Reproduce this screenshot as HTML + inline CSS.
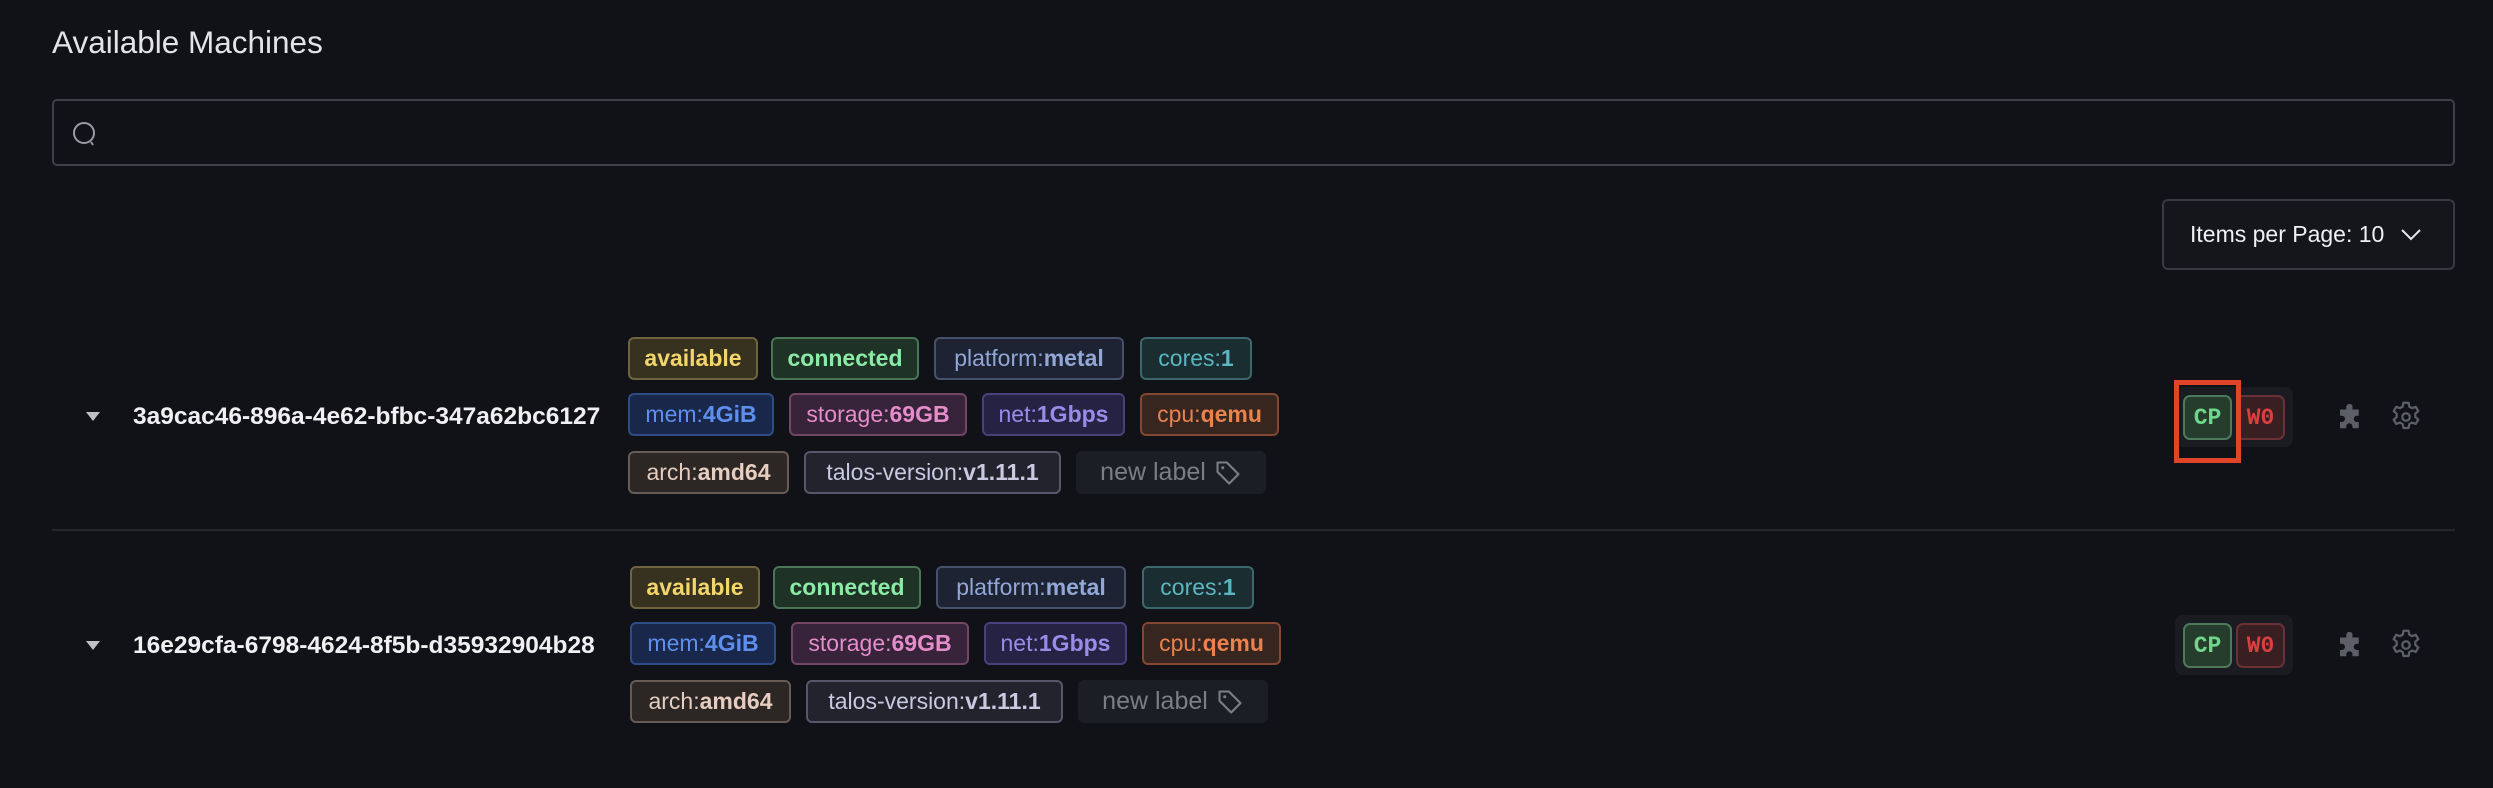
<!DOCTYPE html>
<html><head><meta charset="utf-8"><style>
*{box-sizing:border-box;margin:0;padding:0}
body{width:2493px;height:788px;background:#111217;font-family:"Liberation Sans",Arial,sans-serif;position:relative;overflow:hidden;color:#e6e6ea}
.abs{position:absolute}
.title{left:52px;top:24px;font-size:31.5px;color:#e4e4e8}
.search{left:52px;top:99px;width:2403px;height:67px;border:2px solid #3e4048;border-radius:5px}
.ipp{left:2162px;top:199px;width:293px;height:71px;border:2px solid #383a42;border-radius:6px;background:#15161c;font-size:23px;color:#f0f0f2;display:flex;align-items:center;padding-left:26px}
.tag{position:absolute;height:43px;border:2px solid;border-radius:6px;font-size:23px;display:flex;align-items:center;justify-content:center;white-space:nowrap}
.tag b{font-weight:bold}
.av{background:#36321f;border-color:#6e6440;color:#f4d56c;font-weight:bold}
.cn{background:#1f3226;border-color:#4a7656;color:#8aeaa6;font-weight:bold}
.pl{background:#1d2333;border-color:#46526c;color:#92a7d6}
.co{background:#1a2d31;border-color:#3c676d;color:#5bb6c2}
.me{background:#19284a;border-color:#2e4c86;color:#5f8fee}
.st{background:#37233a;border-color:#724766;color:#e58ccb}
.ne{background:#252244;border-color:#48417c;color:#9b8be8}
.cp{background:#37251f;border-color:#84472f;color:#e9824c}
.ar{background:#2c2725;border-color:#665b55;color:#e6cdbf}
.ta{background:#23232d;border-color:#57576c;color:#c9c9e2}
.nl{background:#1c1e25;border-color:#1c1e25;color:#7b7e86;font-size:25px}
.id{font-weight:bold;font-size:24.5px;color:#f0f0f2}
.caret{width:0;height:0;border-left:7px solid transparent;border-right:7px solid transparent;border-top:9px solid #bfc0c6}
.grp{width:118px;height:60px;background:#1a1c22;border-radius:8px}
.btn{width:49px;height:45px;border:2px solid;border-radius:7px;font-family:"Liberation Mono",monospace;font-weight:bold;font-size:23px;display:flex;align-items:center;justify-content:center}
.bcp{background:#263d2e;border-color:#4c7a5a;color:#6fd68a}
.bw{background:#3a1f22;border-color:#6a3234;color:#d8413f}
</style></head><body>
<div class="abs title">Available Machines</div>
<div class="abs search"><svg class="abs" style="left:18px;top:20px" width="28" height="28" viewBox="0 0 28 28"><circle cx="12" cy="12" r="10" fill="none" stroke="#9a9ca3" stroke-width="2"/><path d="M19 21 L21 24" stroke="#9a9ca3" stroke-width="2"/></svg></div>
<div class="abs ipp">Items per Page: 10<svg style="margin-left:16px" width="22" height="14" viewBox="0 0 22 14"><path d="M2 2 L11 11 L20 2" fill="none" stroke="#e8e8ea" stroke-width="2"/></svg></div>

<!-- row 1 -->
<div class="abs caret" style="left:86px;top:412px"></div>
<div class="abs id" style="left:133px;top:403px">3a9cac46-896a-4e62-bfbc-347a62bc6127</div>
<div class="tag av" style="left:628px;top:337px;width:130px">available</div>
<div class="tag cn" style="left:771px;top:337px;width:148px">connected</div>
<div class="tag pl" style="left:934px;top:337px;width:190px">platform:<b>metal</b></div>
<div class="tag co" style="left:1140px;top:337px;width:112px">cores:<b>1</b></div>
<div class="tag me" style="left:628px;top:393px;width:146px">mem:<b>4GiB</b></div>
<div class="tag st" style="left:789px;top:393px;width:178px">storage:<b>69GB</b></div>
<div class="tag ne" style="left:982px;top:393px;width:143px">net:<b>1Gbps</b></div>
<div class="tag cp" style="left:1140px;top:393px;width:139px">cpu:<b>qemu</b></div>
<div class="tag ar" style="left:628px;top:451px;width:161px">arch:<b>amd64</b></div>
<div class="tag ta" style="left:804px;top:451px;width:257px">talos-version:<b>v1.11.1</b></div>
<div class="tag nl" style="left:1076px;top:451px;width:190px">new label<svg style="margin-left:8px" width="28" height="28" viewBox="0 0 24 24"><path d="M3 3 H11 L21 13 L13 21 L3 11 Z" fill="none" stroke="#7b7e86" stroke-width="1.8" stroke-linejoin="round"/><circle cx="7.5" cy="7.5" r="1.3" fill="#7b7e86"/></svg></div>
<div class="abs grp" style="left:2175px;top:387px"></div>
<div class="abs btn bcp" style="left:2183px;top:395px">CP</div>
<div class="abs btn bw" style="left:2236px;top:395px">W0</div>
<div class="abs" style="left:2174px;top:380px;width:67px;height:83px;border:5px solid #e0452a"></div>

<div class="abs" style="left:52px;top:529px;width:2403px;height:2px;background:#26272d"></div>

<!-- row 2 -->
<div class="abs caret" style="left:86px;top:641px"></div>
<div class="abs id" style="left:133px;top:632px">16e29cfa-6798-4624-8f5b-d35932904b28</div>
<div class="tag av" style="left:630px;top:566px;width:130px">available</div>
<div class="tag cn" style="left:773px;top:566px;width:148px">connected</div>
<div class="tag pl" style="left:936px;top:566px;width:190px">platform:<b>metal</b></div>
<div class="tag co" style="left:1142px;top:566px;width:112px">cores:<b>1</b></div>
<div class="tag me" style="left:630px;top:622px;width:146px">mem:<b>4GiB</b></div>
<div class="tag st" style="left:791px;top:622px;width:178px">storage:<b>69GB</b></div>
<div class="tag ne" style="left:984px;top:622px;width:143px">net:<b>1Gbps</b></div>
<div class="tag cp" style="left:1142px;top:622px;width:139px">cpu:<b>qemu</b></div>
<div class="tag ar" style="left:630px;top:680px;width:161px">arch:<b>amd64</b></div>
<div class="tag ta" style="left:806px;top:680px;width:257px">talos-version:<b>v1.11.1</b></div>
<div class="tag nl" style="left:1078px;top:680px;width:190px">new label<svg style="margin-left:8px" width="28" height="28" viewBox="0 0 24 24"><path d="M3 3 H11 L21 13 L13 21 L3 11 Z" fill="none" stroke="#7b7e86" stroke-width="1.8" stroke-linejoin="round"/><circle cx="7.5" cy="7.5" r="1.3" fill="#7b7e86"/></svg></div>
<div class="abs grp" style="left:2175px;top:615px"></div>
<div class="abs btn bcp" style="left:2183px;top:623px">CP</div>
<div class="abs btn bw" style="left:2236px;top:623px">W0</div>

<!-- icons -->
<svg class="abs" style="left:2335px;top:402px" width="30" height="30" viewBox="0 0 24 24"><path d="M10 2 a2.5 2.5 0 0 1 4 1.5 V6 h5 v5 h-1.5 a2.5 2.5 0 1 0 0 5 H19 v5 h-5 v-1.5 a2.5 2.5 0 1 0-5 0 V21 H4 v-5 h1.5 a2.5 2.5 0 1 0 0-5 H4 V6 h5 V3.5 Z" fill="#5d5f68"/></svg>
<svg class="abs" style="left:2388px;top:399px" width="36" height="36" viewBox="0 0 24 24"><path d="M10.3 2.5h3.4l.5 2.6 1.8 1 2.5-.9 1.7 2.9-2 1.7v2.2l2 1.7-1.7 2.9-2.5-.9-1.8 1-.5 2.6h-3.4l-.5-2.6-1.8-1-2.5.9-1.7-2.9 2-1.7v-2.2l-2-1.7 1.7-2.9 2.5.9 1.8-1z" fill="none" stroke="#5d5f68" stroke-width="1.5" stroke-linejoin="round"/><circle cx="12" cy="12" r="2.5" fill="none" stroke="#5d5f68" stroke-width="1.5"/></svg>
<svg class="abs" style="left:2335px;top:630px" width="30" height="30" viewBox="0 0 24 24"><path d="M10 2 a2.5 2.5 0 0 1 4 1.5 V6 h5 v5 h-1.5 a2.5 2.5 0 1 0 0 5 H19 v5 h-5 v-1.5 a2.5 2.5 0 1 0-5 0 V21 H4 v-5 h1.5 a2.5 2.5 0 1 0 0-5 H4 V6 h5 V3.5 Z" fill="#5d5f68"/></svg>
<svg class="abs" style="left:2388px;top:627px" width="36" height="36" viewBox="0 0 24 24"><path d="M10.3 2.5h3.4l.5 2.6 1.8 1 2.5-.9 1.7 2.9-2 1.7v2.2l2 1.7-1.7 2.9-2.5-.9-1.8 1-.5 2.6h-3.4l-.5-2.6-1.8-1-2.5.9-1.7-2.9 2-1.7v-2.2l-2-1.7 1.7-2.9 2.5.9 1.8-1z" fill="none" stroke="#5d5f68" stroke-width="1.5" stroke-linejoin="round"/><circle cx="12" cy="12" r="2.5" fill="none" stroke="#5d5f68" stroke-width="1.5"/></svg>
</body></html>
